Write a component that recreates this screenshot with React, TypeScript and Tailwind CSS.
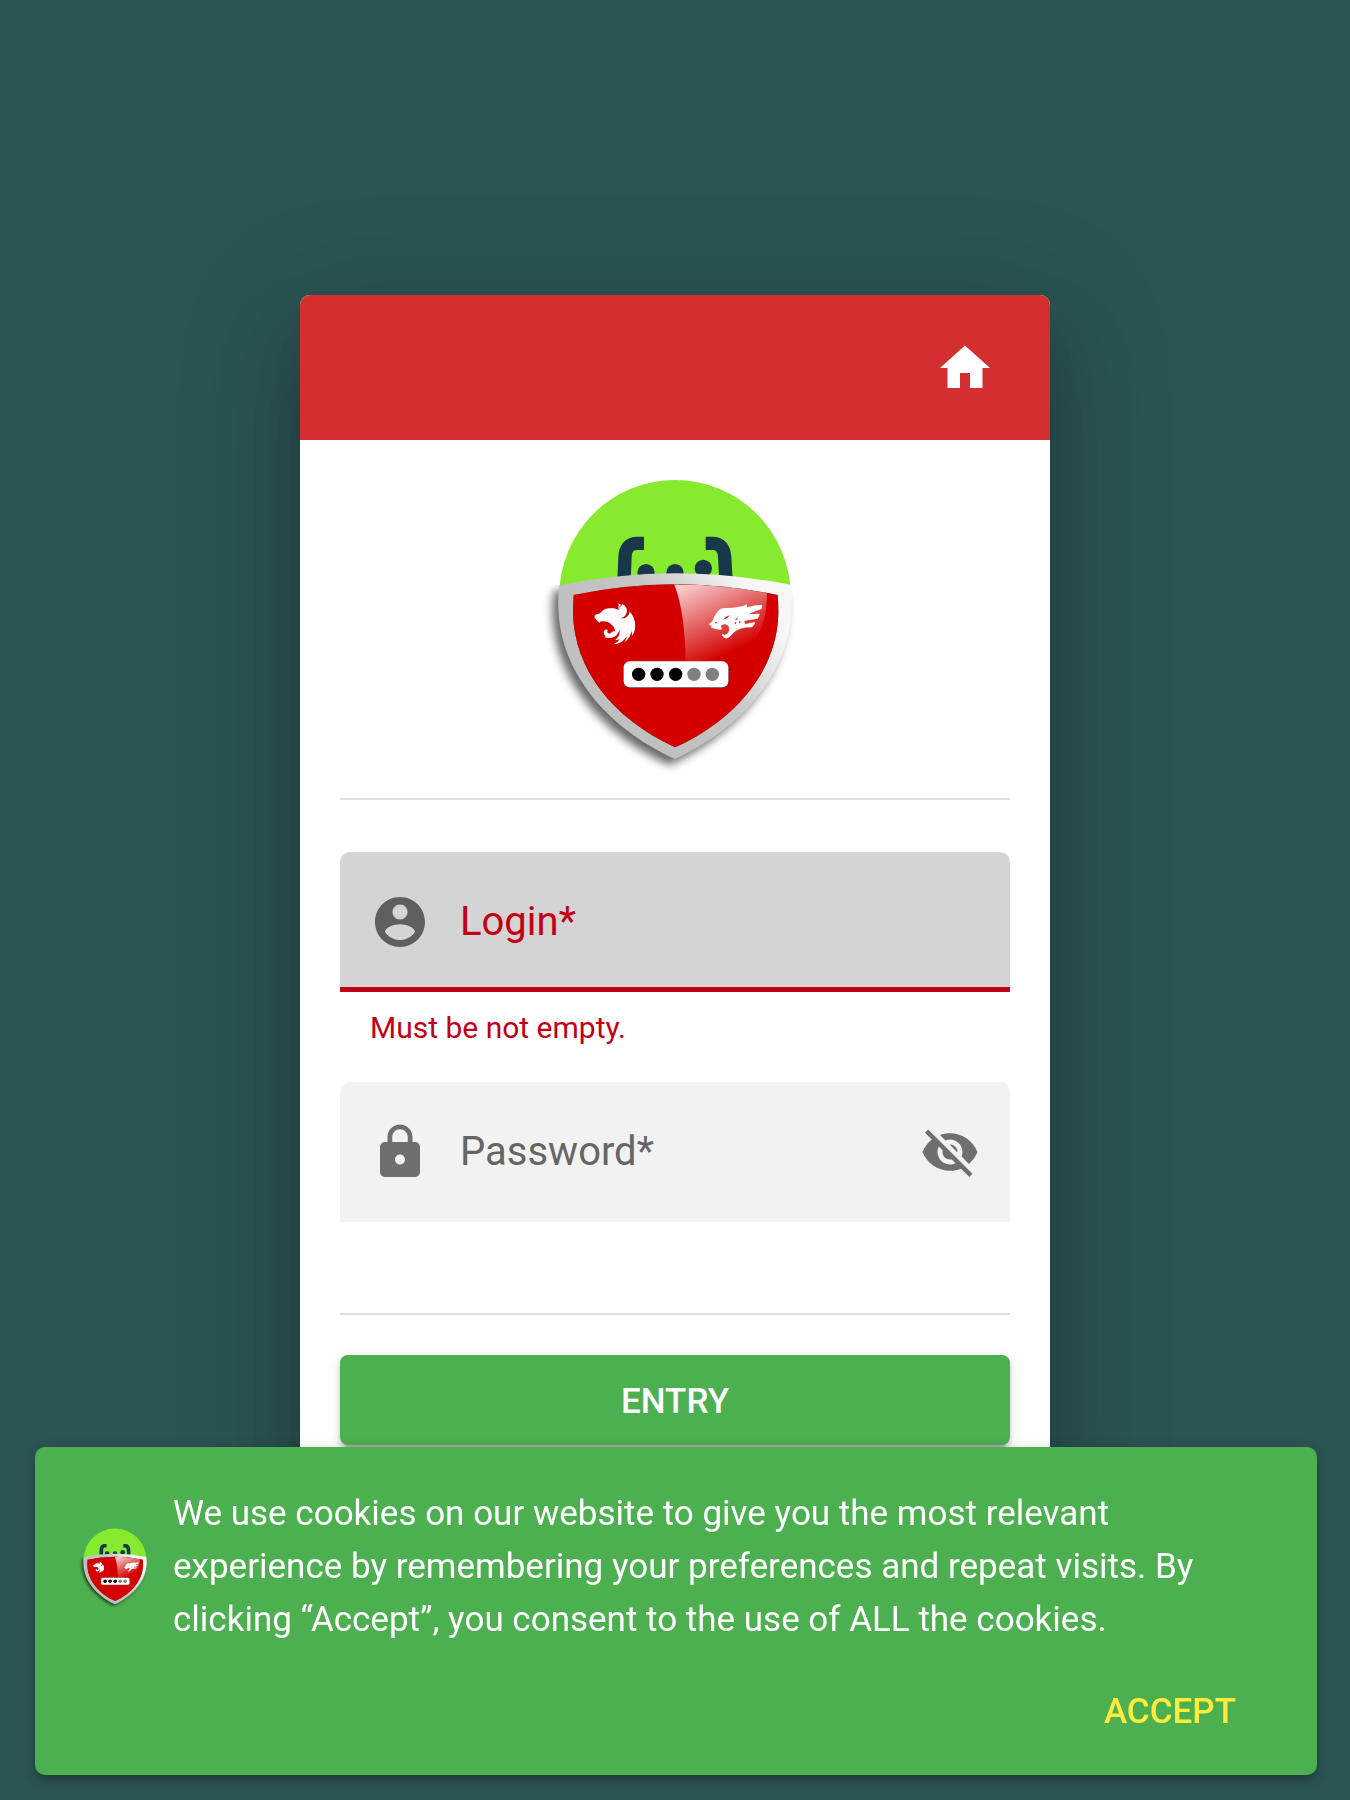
import { useId, useState, type ReactNode } from "react";
import { MdHome, MdLock, MdVisibility, MdVisibilityOff } from "react-icons/md";
import { SiNestjs } from "react-icons/si";

function AccountIcon({ className }: { className: string }) {
  return (
    <svg viewBox="0 0 24 24" fill="currentColor" className={className} aria-hidden="true">
      <path d="M12 2C6.48 2 2 6.48 2 12s4.48 10 10 10 10-4.48 10-10S17.52 2 12 2zm0 3c1.66 0 3 1.34 3 3s-1.34 3-3 3-3-1.34-3-3 1.34-3 3-3zm0 14.2c-2.5 0-4.71-1.28-6-3.22.03-1.99 4-3.08 6-3.08 1.99 0 5.97 1.09 6 3.08-1.29 1.94-3.5 3.22-6 3.22z" />
    </svg>
  );
}

function Logo({ className }: { className: string }) {
  const id = useId();
  const rim = `${id}-rim`;
  const gloss = `${id}-gloss`;
  const drop = `${id}-drop`;
  const inner = `${id}-inner`;
  const soft = `${id}-soft`;
  const head = `${id}-head`;
  const below = `${id}-below`;
  const shield =
    "M88 376Q260 341 435 340Q610 341 782 374Q787 405 785 440C782 630 645 800 435 897C225 800 88 630 85 440Q84 405 88 376Z";
  const field =
    "M131 405Q280 374 435 373Q590 374 743 405Q745 430 745 460C742 625 625 775 435 862C245 775 132 625 129 460Q129 430 131 405Z";
  return (
    <svg viewBox="15 0 840 960" className={className} role="img" aria-label="Logo">
      <defs>
        <linearGradient id={rim} gradientUnits="userSpaceOnUse" x1="330" y1="690" x2="690" y2="430">
          <stop offset="0" stopColor="#c0c0c0" />
          <stop offset="0.45" stopColor="#c6c6c6" />
          <stop offset="1" stopColor="#f7f7f7" />
        </linearGradient>
        <linearGradient id={gloss} gradientUnits="userSpaceOnUse" x1="450" y1="365" x2="560" y2="600">
          <stop offset="0" stopColor="#fff" stopOpacity="0.85" />
          <stop offset="1" stopColor="#fff" stopOpacity="0" />
        </linearGradient>
        <filter id={drop} x="-20%" y="-20%" width="140%" height="140%">
          <feGaussianBlur stdDeviation="15" />
        </filter>
        <filter id={soft} x="-20%" y="-20%" width="140%" height="140%">
          <feGaussianBlur stdDeviation="2" />
        </filter>
        <clipPath id={inner}>
          <path d={field} />
        </clipPath>
        <clipPath id={head}>
          <path d="M0 0H870V390H0Z" />
        </clipPath>
        <clipPath id={below}>
          <path d="M0 376H870V960H0Z" />
        </clipPath>
      </defs>
      <g clipPath={`url(#${below})`}>
        <path d={shield} fill="#000" opacity="0.6" filter={`url(#${drop})`} transform="translate(-17 18)" />
      </g>
      <circle cx="435" cy="407" r="347" fill="#86eb2e" clipPath={`url(#${head})`} />
      <g fill="none" stroke="#18384a" strokeWidth="40">
        <path d="M342 250H322Q286 250 285 292L282 362" />
        <path d="M527 250H547Q582 250 584 292L588 362" />
      </g>
      <g fill="#18384a">
        <circle cx="348" cy="338" r="26" />
        <circle cx="435" cy="338" r="26" />
        <circle cx="520" cy="325" r="26" />
      </g>
      <path d={shield} fill={`url(#${rim})`} />
      <path d={field} fill="#555" filter={`url(#${soft})`} />
      <path d={field} fill="#d40000" />
      <path
        d="M432 373C456 430 467 520 467 610Q560 600 660 555Q712 505 711 398Q570 372 432 373Z"
        fill={`url(#${gloss})`}
        clipPath={`url(#${inner})`}
      />
      <SiNestjs x={193} y={430} size={123} color="#fff" />
      <g transform="translate(480 390)">
        <path
          fill="#fff"
          d="M58 101L67 94Q72 77 84 63Q92 54 106 54Q122 55 138 52L162 47L171 42L171 52Q192 44 216 44Q218 48 214 57Q194 63 175 73Q193 72 209 71Q208 79 203 86L164 92Q162 99 166 102Q183 98 196 97Q193 106 186 112Q166 112 151 116Q135 122 129 130Q122 140 113 145Q103 147 95 136L97 132Q104 137 111 132Q118 126 117 116Q117 106 107 103Q96 101 92 109Q98 114 94 119Q83 119 74 116Q66 115 61 110L67 108L58 105Z"
        />
        <path
          fill="#d9201f"
          d="M119 76Q106 79 100 88L108 86Q115 83 119 76ZM137 86L143 84L141 89L136 91ZM134 97L139 96L138 101L134 102ZM148 94L152 94L151 99L147 99Z"
        />
        <path fill="none" stroke="#d9201f" strokeWidth="3" d="M75 98L82 98" />
      </g>
      <rect x="281" y="604" width="315" height="80" rx="19" fill="#444" filter={`url(#${soft})`} />
      <rect x="281" y="604" width="314" height="78" rx="18" fill="#fff" />
      <g fill="#000">
        <circle cx="326" cy="643" r="20" />
        <circle cx="381" cy="643" r="20" />
        <circle cx="437" cy="643" r="20" />
      </g>
      <g fill="#808080">
        <circle cx="492" cy="643" r="20" />
        <circle cx="547" cy="643" r="20" />
      </g>
    </svg>
  );
}

type FieldProps = {
  id: string;
  label: string;
  type: string;
  icon: ReactNode;
  trailing?: ReactNode;
  error?: string;
};

function Field({ id, label, type, icon, trailing, error }: FieldProps) {
  const [value, setValue] = useState("");
  return (
    <div>
      <div
        className={`flex h-[140px] items-center gap-[30px] rounded-t-[10px] px-[30px] ${
          error ? "bg-[#d4d4d4] text-[#5f5f5f] shadow-[inset_0_-5px_0_#c20015]" : "bg-[#f2f2f2] text-[#6f6f6f]"
        }`}
      >
        {icon}
        <div className="grid h-full min-w-0 flex-1 items-center text-[40px] leading-[48px]">
          <label
            htmlFor={id}
            className={`col-start-1 row-start-1 ${value ? "invisible" : ""} ${error ? "text-[#c20015]" : "text-[#656565]"}`}
          >
            {label}
          </label>
          <input
            id={id}
            type={type}
            required
            value={value}
            onChange={(e) => setValue(e.target.value)}
            aria-invalid={Boolean(error)}
            aria-describedby={`${id}-hint`}
            className="col-start-1 row-start-1 h-full w-full min-w-0 bg-transparent text-black/85 outline-none"
          />
        </div>
        {trailing}
      </div>
      <p id={`${id}-hint`} className="h-[90px] px-[30px] pt-[18px] text-[30px] leading-[36px] text-[#c20015]">
        {error}
      </p>
    </div>
  );
}

export default function App() {
  const [visible, setVisible] = useState(false);
  const [accepted, setAccepted] = useState(false);
  return (
    <div className="flex min-h-screen items-center justify-center bg-[#2c5454] font-['Roboto',sans-serif]">
      <main className="w-full max-w-[750px] overflow-hidden rounded-[10px] bg-white shadow-[0_27px_37px_-17px_rgba(0,0,0,0.2),0_60px_95px_7px_rgba(0,0,0,0.14),0_22px_115px_20px_rgba(0,0,0,0.12)]">
        <header className="flex h-[145px] items-center justify-end bg-[#d32f2f] px-[55px] text-white">
          <a href="#home" aria-label="Home">
            <MdHome className="size-[60px]" />
          </a>
        </header>
        <form className="px-10 pb-[60px]" onSubmit={(e) => e.preventDefault()}>
          <div className="flex justify-center pt-5 pb-[18px]">
            <Logo className="h-[320px] w-[280px]" />
          </div>
          <hr className="border-t-2 border-[#dedede]" />
          <div className="pt-[52px] pb-px">
            <Field
              id="login"
              label="Login*"
              type="text"
              error="Must be not empty."
              icon={<AccountIcon className="size-[60px] shrink-0" />}
            />
            <Field
              id="password"
              label="Password*"
              type={visible ? "text" : "password"}
              icon={<MdLock className="size-[60px] shrink-0" />}
              trailing={
                <button type="button" aria-label="Toggle password visibility" onClick={() => setVisible(!visible)}>
                  {visible ? <MdVisibility className="size-[60px]" /> : <MdVisibilityOff className="size-[60px]" />}
                </button>
              }
            />
          </div>
          <hr className="border-t-2 border-[#dedede]" />
          <button
            type="submit"
            className="mt-10 h-[90px] w-full rounded-[8px] bg-[#4caf50] pt-1 text-[35px] leading-[40px] font-medium text-white shadow-[0_8px_3px_-5px_rgba(0,0,0,0.2),0_5px_5px_0_rgba(0,0,0,0.14),0_3px_13px_0_rgba(0,0,0,0.12)]"
          >
            ENTRY
          </button>
        </form>
      </main>
      {!accepted && (
        <aside className="fixed inset-x-0 bottom-[25px] mr-[33px] ml-[35px] rounded-[10px] bg-[#4caf50] pt-10 pb-[18px] text-white shadow-[0_8px_13px_-3px_rgba(0,0,0,0.2),0_3px_13px_0_rgba(0,0,0,0.2)]">
          <div className="flex items-center gap-[20px] pr-[80px] pl-[42px]">
            <Logo className="h-[87px] w-[76px] shrink-0" />
            <p className="text-[35px] leading-[53px]">
              We use cookies on our website to give you the most relevant experience by remembering your preferences and
              repeat visits. By clicking “Accept”, you consent to the use of ALL the cookies.
            </p>
          </div>
          <div className="flex justify-end pt-[21px] pr-[61px]">
            <button
              type="button"
              onClick={() => setAccepted(true)}
              className="h-[90px] px-5 text-[35px] leading-[40px] font-medium text-[#ffeb3b]"
            >
              ACCEPT
            </button>
          </div>
        </aside>
      )}
    </div>
  );
}
